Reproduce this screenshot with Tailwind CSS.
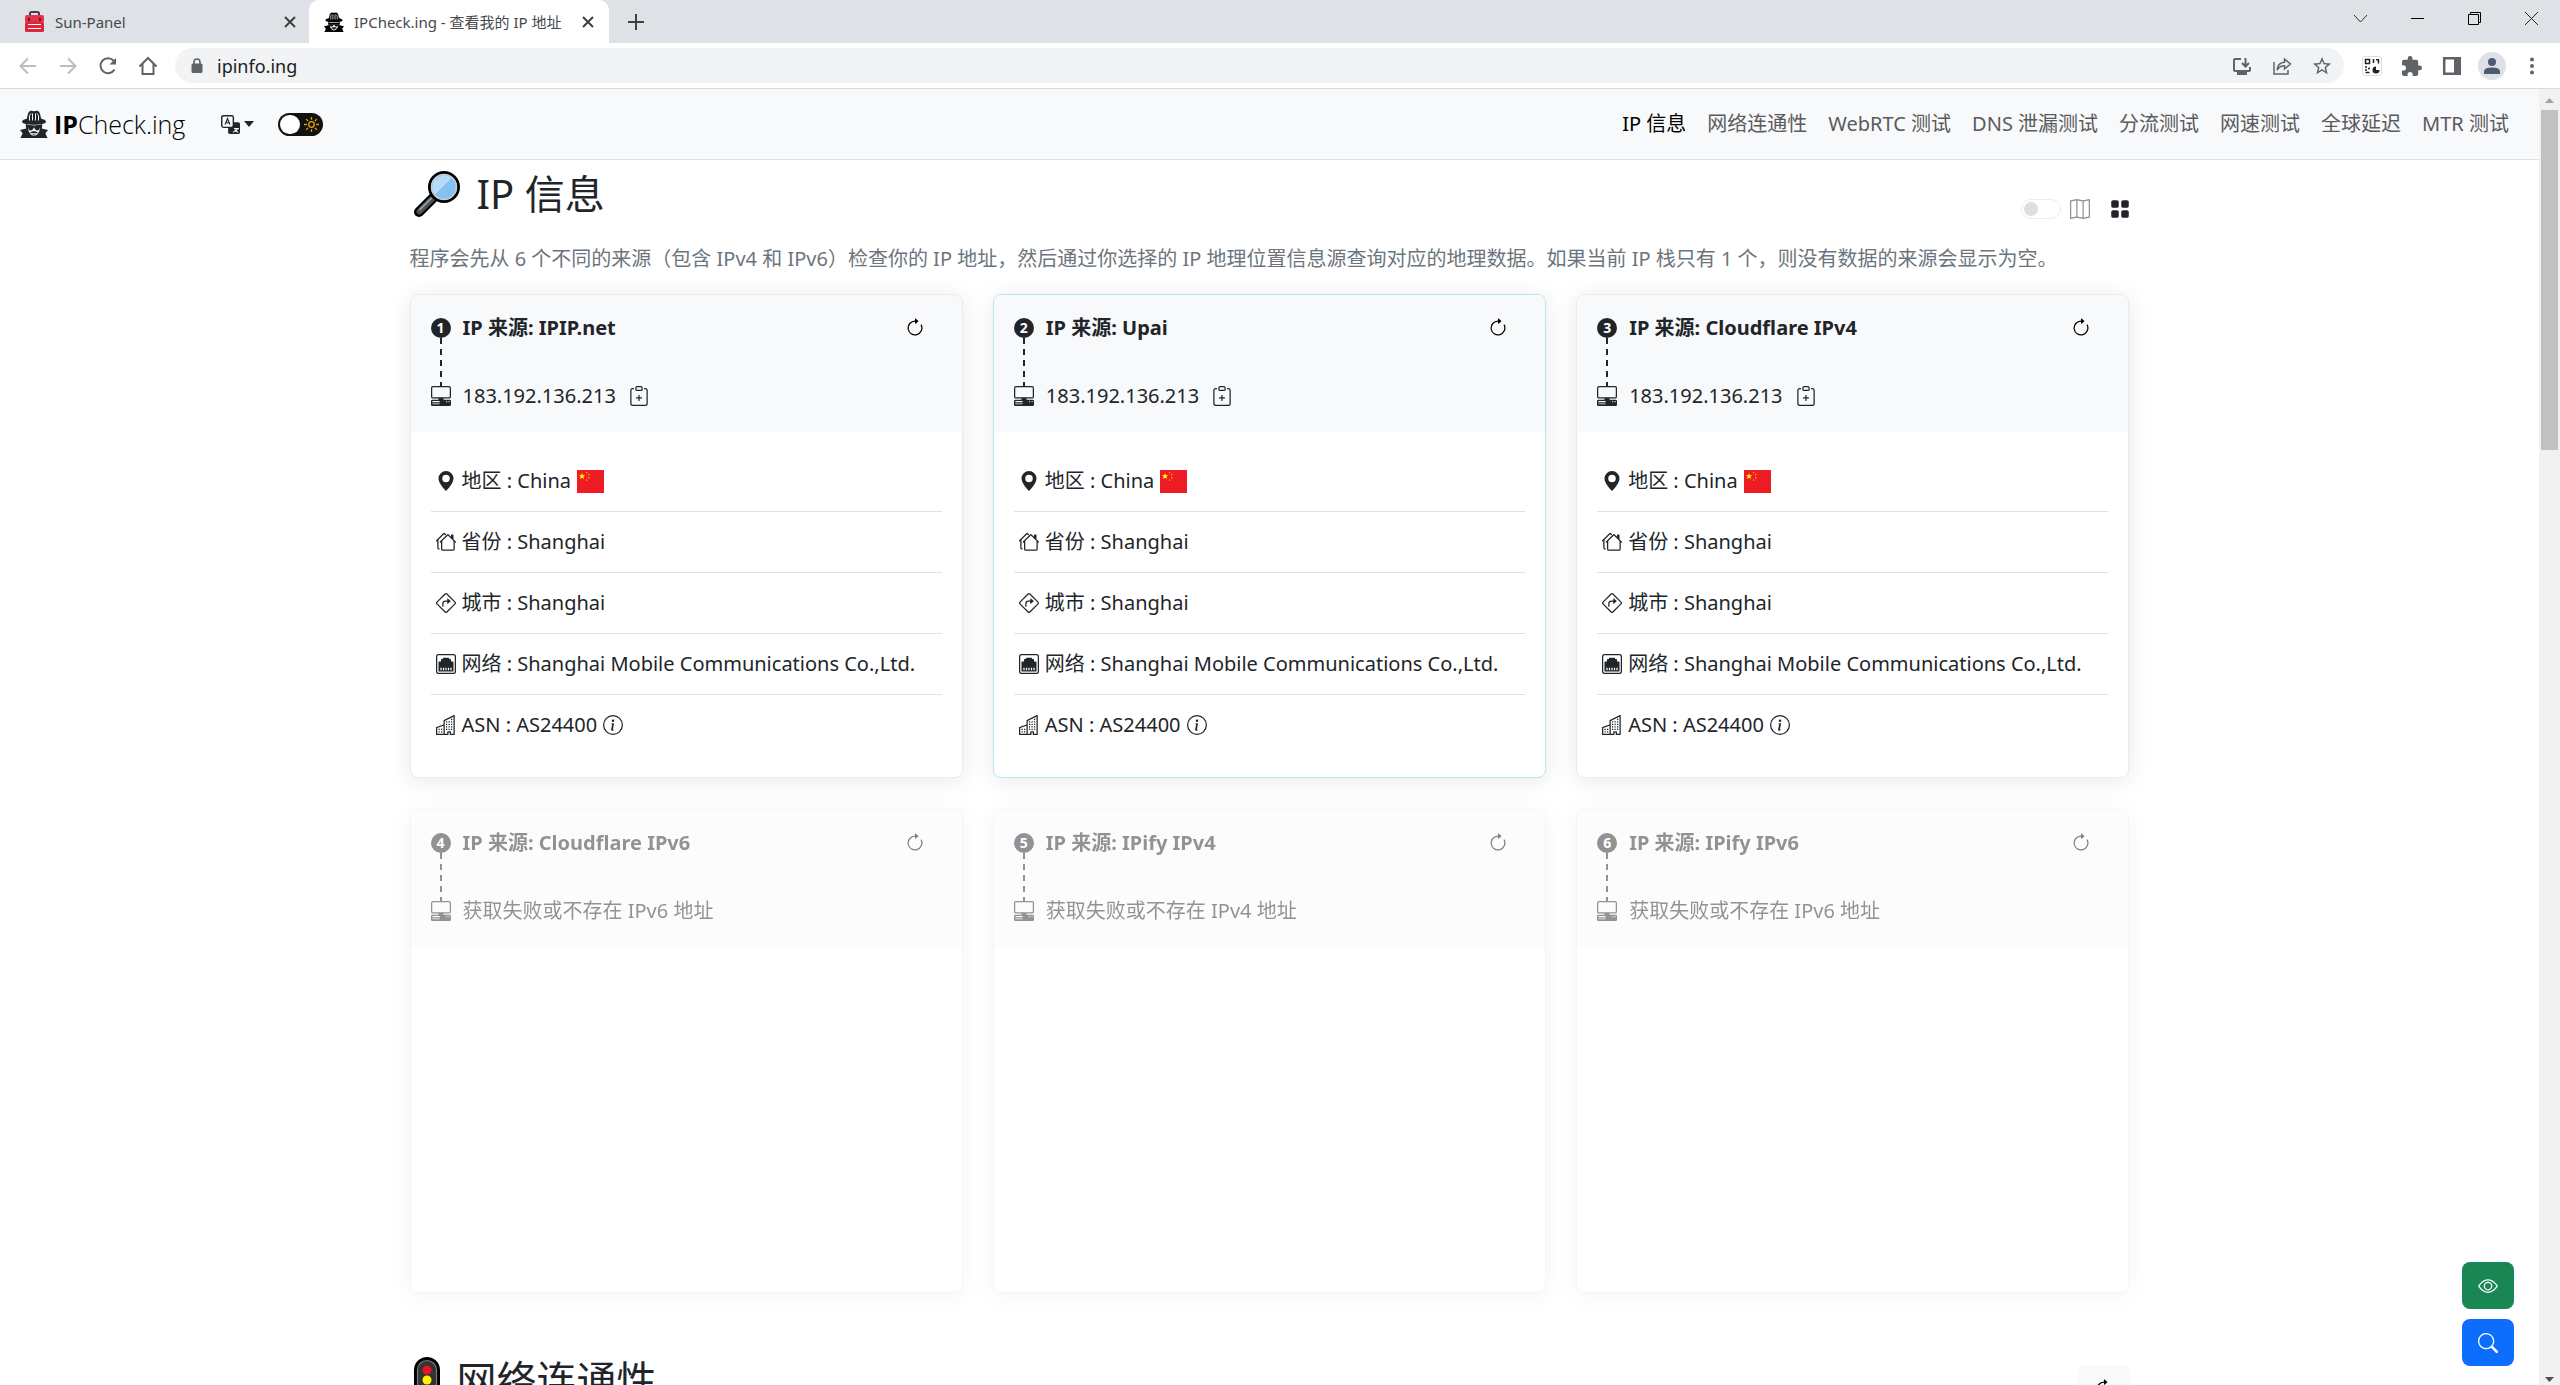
<!DOCTYPE html>
<html lang="zh-CN">
<head>
<meta charset="utf-8">
<meta name="viewport" content="width=device-width, initial-scale=1">
<title>IPCheck.ing - 查看我的 IP 地址</title>
<script src="https://cdn.jsdelivr.net/npm/@tailwindcss/browser@4"></script>
</head>
<body class="flex h-screen flex-col overflow-hidden bg-white font-['Noto_Sans','Noto_Sans_CJK_SC',sans-serif] text-[20px] leading-[30px] text-[#212529]">

<!-- Icon library -->
<svg class="hidden" aria-hidden="true">
  <symbol id="refresh" viewBox="0 0 16 16"><path fill-rule="evenodd" d="M8 3a5 5 0 1 0 4.546 2.914.5.5 0 0 1 .908-.417A6 6 0 1 1 8 2z"/><path d="M8 4.466V.534a.25.25 0 0 1 .41-.192l2.36 1.966c.12.1.12.284 0 .384L8.41 4.658A.25.25 0 0 1 8 4.466"/></symbol>
  <symbol id="pc" viewBox="0 0 16 16"><path d="M1.5 0A1.5 1.5 0 0 0 0 1.5v7A1.5 1.5 0 0 0 1.5 10H6v1H1a1 1 0 0 0-1 1v3a1 1 0 0 0 1 1h14a1 1 0 0 0 1-1v-3a1 1 0 0 0-1-1h-5v-1h4.500A1.500 1.500 0 0 0 16 8.500v-7A1.500 1.500 0 0 0 14.500 0zm0 1h13a.5.5 0 0 1 .5.5v7a.5.5 0 0 1-.5.5h-13a.5.5 0 0 1-.5-.5v-7a.5.5 0 0 1 .5-.5M12 12.500a.5.5 0 1 1 1 0 .5.5 0 0 1-1 0m2 0a.5.5 0 1 1 1 0 .5.5 0 0 1-1 0M1.500 12h5a.5.5 0 0 1 0 1h-5a.5.5 0 0 1 0-1M1 14.250a.25.25 0 0 1 .25-.25h5.500a.25.25 0 1 1 0 .5h-5.500a.25.25 0 0 1-.25-.25"/></symbol>
  <symbol id="clip" viewBox="0 0 16 16"><path fill-rule="evenodd" d="M8 7a.5.5 0 0 1 .5.5V9H10a.5.5 0 0 1 0 1H8.500v1.500a.5.5 0 0 1-1 0V10H6a.5.5 0 0 1 0-1h1.500V7.500A.5.5 0 0 1 8 7"/><path d="M4 1.500H3a2 2 0 0 0-2 2V14a2 2 0 0 0 2 2h10a2 2 0 0 0 2-2V3.500a2 2 0 0 0-2-2h-1v1h1a1 1 0 0 1 1 1V14a1 1 0 0 1-1 1H3a1 1 0 0 1-1-1V3.500a1 1 0 0 1 1-1h1z"/><path d="M9.500 1a.5.5 0 0 1 .5.5v1a.5.5 0 0 1-.5.5h-3a.5.5 0 0 1-.5-.5v-1a.5.5 0 0 1 .5-.5zm-3-1A1.500 1.500 0 0 0 5 1.500v1A1.500 1.500 0 0 0 6.500 4h3A1.500 1.500 0 0 0 11 2.500v-1A1.500 1.500 0 0 0 9.500 0z"/></symbol>
  <symbol id="geo" viewBox="0 0 16 16"><path d="M8 16s6-5.686 6-10A6 6 0 0 0 2 6c0 4.314 6 10 6 10m0-7a3 3 0 1 1 0-6 3 3 0 0 1 0 6"/></symbol>
  <symbol id="houses" viewBox="0 0 16 16"><path d="M5.793 1a1 1 0 0 1 1.414 0l.647.646a.5.5 0 1 1-.708.708L6.5 1.707 2 6.207V12.5a.5.5 0 0 0 .5.5.5.5 0 0 1 0 1A1.5 1.5 0 0 1 1 12.5V7.207l-.146.147a.5.5 0 0 1-.708-.708zm3 1a1 1 0 0 1 1.414 0L12 3.793V2.500a.5.5 0 0 1 .5-.5h1a.5.5 0 0 1 .5.5v3.293l1.854 1.853a.5.5 0 0 1-.708.708L15 8.207V13.500a1.500 1.500 0 0 1-1.500 1.500h-8A1.500 1.500 0 0 1 4 13.500V8.207l-.146.147a.5.5 0 1 1-.708-.708zm.707.707L5 7.207V13.500a.5.5 0 0 0 .5.5h8a.5.5 0 0 0 .5-.5V7.207z"/></symbol>
  <symbol id="turn" viewBox="0 0 16 16"><path d="M5 8.500A2.500 2.500 0 0 1 7.500 6H9V4.534a.25.25 0 0 1 .41-.192l2.360 1.966c.12.1.12.284 0 .384L9.410 8.658A.25.25 0 0 1 9 8.466V7H7.500A1.500 1.500 0 0 0 6 8.500V11H5z"/><path fill-rule="evenodd" d="M6.950.435c.58-.58 1.520-.58 2.100 0l6.515 6.516c.58.58.58 1.519 0 2.098L9.050 15.565c-.58.58-1.519.58-2.098 0L.435 9.050a1.480 1.480 0 0 1 0-2.098zm1.400.7a.495.495 0 0 0-.7 0L1.134 7.650a.495.495 0 0 0 0 .7l6.516 6.516a.495.495 0 0 0 .7 0l6.516-6.516a.495.495 0 0 0 0-.7L8.350 1.134z"/></symbol>
  <symbol id="ethernet" viewBox="0 0 16 16"><path fill-rule="evenodd" d="M14 13.500v-7a.5.5 0 0 0-.5-.5H12V4.500a.5.5 0 0 0-.5-.5h-1v-.5A.5.5 0 0 0 10 3H6a.5.5 0 0 0-.5.5V4h-1a.5.5 0 0 0-.5.5V6H2.500a.5.5 0 0 0-.5.5v7a.5.5 0 0 0 .5.5h11a.5.5 0 0 0 .5-.5M3.500 11h1v2h-1zM5.500 11h1v2h-1zM7.500 11h1v2h-1zM9.500 11h1v2h-1zM11.500 11h1v2h-1z"/><path d="M2 0a2 2 0 0 0-2 2v12a2 2 0 0 0 2 2h12a2 2 0 0 0 2-2V2a2 2 0 0 0-2-2zM1 2a1 1 0 0 1 1-1h12a1 1 0 0 1 1 1v12a1 1 0 0 1-1 1H2a1 1 0 0 1-1-1z"/></symbol>
  <symbol id="buildings" viewBox="0 0 16 16"><path d="M14.763.075A.5.5 0 0 1 15 .5v15a.5.5 0 0 1-.5.5h-3a.5.5 0 0 1-.5-.5V14h-1v1.500a.5.5 0 0 1-.5.5h-9a.5.5 0 0 1-.5-.5V10a.5.5 0 0 1 .342-.474L6 7.640V4.500a.5.5 0 0 1 .276-.447l8-4a.5.5 0 0 1 .487.022M6 8.694 1 10.360V15h5zM7 15h2v-1.500a.5.5 0 0 1 .5-.5h2a.5.5 0 0 1 .5.5V15h2V1.309l-7 3.500z"/><path d="M2 11h1v1H2zm2 0h1v1H4zm-2 2h1v1H2zm2 0h1v1H4zm4-4h1v1H8zm2 0h1v1h-1zm-2 2h1v1H8zm2 0h1v1h-1zm2-2h1v1h-1zm0 2h1v1h-1zM8 7h1v1H8zm2 0h1v1h-1zm2 0h1v1h-1zM8 5h1v1H8zm2 0h1v1h-1zm2 0h1v1h-1zm0-2h1v1h-1z"/></symbol>
  <symbol id="info" viewBox="0 0 16 16"><path d="M8 15A7 7 0 1 1 8 1a7 7 0 0 1 0 14m0 1A8 8 0 1 0 8 0a8 8 0 0 0 0 16"/><path d="m8.930 6.588-2.290.287-.082.380.450.083c.294.070.352.176.288.469l-.738 3.468c-.194.897.105 1.319.808 1.319.545 0 1.178-.252 1.465-.598l.088-.416c-.2.176-.492.246-.686.246-.275 0-.375-.193-.304-.533zM9 4.500a1 1 0 1 1-2 0 1 1 0 0 1 2 0"/></symbol>
  <symbol id="map" viewBox="0 0 16 16"><path fill-rule="evenodd" d="M15.817.113A.5.5 0 0 1 16 .5v14a.5.5 0 0 1-.402.490l-5 1a.5.5 0 0 1-.196 0L5.500 15.010l-4.902.980A.5.5 0 0 1 0 15.500v-14a.5.5 0 0 1 .402-.490l5-1a.5.5 0 0 1 .196 0L10.500.990l4.902-.980a.5.5 0 0 1 .415.103M10 1.910l-4-.8v12.980l4 .8zm1 12.980 4-.8V1.110l-4 .8zm-6-.8V1.110l-4 .8v12.980z"/></symbol>
  <symbol id="star" viewBox="1 1 22 22"><path d="M22 9.240l-7.190-.620L12 2 9.190 8.630 2 9.240l5.460 4.730L5.820 21 12 17.270 18.180 21l-1.630-7.030zM12 15.400l-3.760 2.270 1-4.280-3.320-2.880 4.380-.380L12 6.100l1.710 4.040 4.380.380-3.320 2.880 1 4.280z"/></symbol>
  <symbol id="spy" viewBox="0 0 28 28">
    <path d="M10 1c1.500-.8 2.500.2 4 .2S16.500.2 18 1c1.600.9 2.500 3.500 3 7.500 2.500.8 5 1.800 5 3.200 0 1.800-5.500 3-12 3S2 13.500 2 11.700c0-1.400 2.500-2.400 5-3.200C7.500 4.500 8.400 1.900 10 1z"/>
    <path d="M6 14c2 1 5 1.400 8 1.400s6-.4 8-1.400c.4 1.500.2 3-.3 4.500L28 20l-2.600 3.300L27.500 28H.5l2.100-4.700L0 20l6.300-1.500C5.800 17 5.600 15.500 6 14z"/>
    <path fill="#f8f9fb" d="M8 17h5l1 .8 1-.8h5c0 2.500-.6 4.800-2 6.500-1.200 1.400-2.600 2.500-4 2.500s-2.800-1.100-4-2.500C8.600 21.800 8 19.500 8 17z"/>
    <path d="M8 17h5.200l.8.500.8-.5H20c0 2-1 3.400-2.700 3.400-1.500 0-2.300-1-2.600-2.200h-1.400c-.3 1.200-1.100 2.200-2.600 2.200C9 20.400 8 19 8 17zM10 22.500l2.500-1.200h3l2.500 1.200-1 .8h-6zM12.500 24.600h3v1h-3z"/>
    <path fill="none" stroke="#f8f9fb" stroke-width="1" d="M9.500 10.500V5.500L11 3.500M12.500 10.500v-7M15.500 10.500v-7M18.500 10.500V5.500L17 3.500"/>
  </symbol>
</svg>

<!-- Browser tab strip -->
<header class="shrink-0">
  <div class="flex h-[43px] items-stretch bg-[#dee1e6] pl-[24px] text-[15px] text-[#45494d]">
    <div class="flex w-[285px] items-center pr-[13px]">
      <svg class="h-[21px] w-[21px]" viewBox="0 0 21 21"><path d="M6 4V2.500Q6 1 7.500 1h6Q15 1 15 2.500V4" fill="none" stroke="#3a4250" stroke-width="2"/><rect x="1" y="4" width="19" height="8" rx="2" fill="#e8304a"/><rect x="1" y="11" width="19" height="10" rx="1.500" fill="#dd2540"/><path d="M4 13.500h13M4 17.500h13" stroke="#fff" stroke-width="1.200"/><path d="M5 7v3M16 7v3" stroke="#5a2030" stroke-width="2"/></svg>
      <span class="ml-[10px] flex-1">Sun-Panel</span>
      <button aria-label="关闭标签页"><svg class="h-[12px] w-[12px]" viewBox="0 0 12 12" stroke="#3c4043" stroke-width="2"><path d="M1 1l10 10M11 1L1 11"/></svg></button>
    </div>
    <div class="flex w-[300px] items-center rounded-t-[10px] bg-white pl-[15px] pr-[15px]">
      <svg class="h-[20px] w-[20px] text-black" fill="currentColor"><use href="#spy"/></svg>
      <span class="ml-[10px] whitespace-nowrap">IPCheck.ing - 查看我的 IP 地址</span>
      <button aria-label="关闭标签页" class="ml-auto"><svg class="h-[12px] w-[12px]" viewBox="0 0 12 12" stroke="#3c4043" stroke-width="2"><path d="M1 1l10 10M11 1L1 11"/></svg></button>
    </div>
    <button aria-label="新标签页" class="ml-[19px]"><svg class="h-[16px] w-[16px]" viewBox="0 0 16 16" stroke="#3c4043" stroke-width="2"><path d="M8 0v16M0 8h16"/></svg></button>
    <div class="ml-auto flex h-[37px] items-center gap-[44px] pr-[22px]">
      <button aria-label="搜索标签页"><svg class="h-[13px] w-[13px]" viewBox="0 0 13 13" fill="none" stroke="#333"><path d="M0 3l6.500 7L13 3"/></svg></button>
      <button aria-label="最小化"><svg class="h-[13px] w-[13px]" viewBox="0 0 13 13"><path d="M0 6h13v1H0z"/></svg></button>
      <button aria-label="还原"><svg class="h-[13px] w-[13px]" viewBox="0 0 13 13" fill="none" stroke="#000"><path d="M.5 2.500h10v10H.5zM2.500 2.500V.5h10v10h-2"/></svg></button>
      <button aria-label="关闭"><svg class="h-[13px] w-[13px]" viewBox="0 0 13 13" stroke="#222"><path d="M0 0l13 13M13 0L0 13"/></svg></button>
    </div>
  </div>

  <!-- Browser toolbar -->
  <div class="flex h-[46px] items-center border-b border-[#d8dadd] bg-white pl-[18px] pr-[18px]">
    <div class="flex items-center gap-[20px]">
      <button aria-label="后退"><svg class="h-[20px] w-[20px]" viewBox="0 0 20 20" fill="none" stroke="#babcbe" stroke-width="2"><path d="M18 10H3M10 2.500L2.500 10l7.500 7.500"/></svg></button>
      <button aria-label="前进"><svg class="h-[20px] w-[20px]" viewBox="0 0 20 20" fill="none" stroke="#babcbe" stroke-width="2"><path d="M2 10h15M10 2.500l7.500 7.500-7.500 7.500"/></svg></button>
      <button aria-label="重新加载"><svg class="h-[20px] w-[20px]" viewBox="0 0 20 20" fill="none" stroke="#5f6368" stroke-width="2"><path d="M16.500 13.500A7.500 7.500 0 1 1 15.500 4.500L17 6"/><path d="M18 2v6.500h-6.500z" fill="#5f6368" stroke="none"/></svg></button>
      <button aria-label="主页"><svg class="h-[20px] w-[20px]" viewBox="0 0 20 20" fill="none" stroke="#5f6368" stroke-width="2"><path d="M1.500 10.500L10 2l8.500 8.500M4.500 8v10h11V8"/></svg></button>
    </div>
    <div class="ml-[17px] flex h-[35px] flex-1 items-center rounded-full bg-[#f1f3f4] pl-[16px] pr-[12px]">
      <svg class="h-[16px] w-[12px]" viewBox="0 0 12 16"><path d="M3 6V4a3 3 0 0 1 6 0v2" fill="none" stroke="#5f6368" stroke-width="1.600"/><rect x=".5" y="5.500" width="11" height="9.500" rx="1.500" fill="#5f6368"/></svg>
      <input aria-label="地址" class="ml-[14px] min-w-0 flex-1 bg-transparent text-[18px] leading-[24px] text-[#202124]" value="ipinfo.ing">
      <div class="flex items-center gap-[20px]">
        <button aria-label="安装应用"><svg class="h-[20px] w-[20px]" viewBox="0 0 20 20" fill="none" stroke="#5f6368" stroke-width="2"><path d="M9 3H3q-1 0-1 1v10q0 1 1 1h14q1 0 1-1v-3M13.500 2v8M10 7l3.500 3.500L17 7"/><path d="M5 15h10v4H5z" fill="#5f6368" stroke="none"/></svg></button>
        <button aria-label="分享"><svg class="h-[20px] w-[20px]" viewBox="0 0 20 20" fill="none" stroke="#5f6368" stroke-width="1.500"><path d="M2 6v12h14v-4M5 14c.5-4.500 3-7.500 7.500-7.700V3L18.500 8l-6 5V9.800C9 9.800 7 11 5 14z"/></svg></button>
        <button aria-label="收藏"><svg class="h-[20px] w-[20px]" fill="#5f6368"><use href="#star"/></svg></button>
      </div>
    </div>
    <div class="ml-[18px] flex items-center gap-[20px]">
      <button aria-label="二维码"><svg class="h-[20px] w-[20px]" viewBox="0 0 20 20"><rect x=".5" y=".5" width="19" height="19" rx="2" fill="#fff" stroke="#ddd"/><path d="M3.500 3.500h4v4h-4zM11.500 3v4M14 3.700h3M16.500 4v3.500M3 11h2M6 12.500h2M3 14h2M3.500 16.500h4" fill="none" stroke="#222" stroke-width="1.500"/><path d="M14 10.500a3.500 3.500 0 1 0 3.500 3.500H14z" fill="#222"/></svg></button>
      <button aria-label="扩展程序"><svg class="h-[20px] w-[20px]" viewBox="2 1 21 21" fill="#5f6368"><path d="M20.500 11H19V7c0-1.100-.9-2-2-2h-4V3.500a2.500 2.500 0 0 0-5 0V5H4c-1.100 0-2 .9-2 2v3.800h1.500a2.700 2.700 0 0 1 0 5.400H2V20c0 1.100.9 2 2 2h3.800v-1.500a2.700 2.700 0 0 1 5.400 0V22H17c1.100 0 2-.9 2-2v-4h1.500a2.500 2.500 0 0 0 0-5z"/></svg></button>
      <button aria-label="侧边栏"><svg class="h-[20px] w-[20px]" viewBox="0 0 20 20" fill="none" stroke="#5f6368" stroke-width="2.500"><path d="M2.200 2.200h15.600v15.600H2.200z"/><path d="M12 2h6v16h-6z" fill="#5f6368" stroke="none"/></svg></button>
      <button aria-label="用户" class="-mx-1"><svg class="h-[28px] w-[28px]" viewBox="0 0 28 28"><circle cx="14" cy="14" r="14" fill="#dee1e8"/><circle cx="14" cy="10" r="4" fill="#4e5a72"/><path d="M6 22v-2.500q0-4 8-4t8 4V22z" fill="#4e5a72"/></svg></button>
      <button aria-label="更多"><svg class="h-[20px] w-[20px]" viewBox="0 0 20 20" fill="#5f6368"><circle cx="10" cy="3.500" r="2"/><circle cx="10" cy="10" r="2"/><circle cx="10" cy="16.500" r="2"/></svg></button>
    </div>
  </div>
</header>

<div class="flex min-h-0 flex-1">
  <div class="relative min-w-0 flex-1 overflow-hidden">
    <!-- Site navigation -->
    <nav class="flex h-[71px] items-center border-b border-[#dcdfe3] bg-[#f8f9fb] pl-[20px] pr-[30px]">
      <a href="#" class="flex items-center font-['Open_Sans','Noto_Sans',sans-serif] text-[25px] font-light leading-[38px] text-black">
        <svg class="mr-[6px] h-[28px] w-[28px] text-[#212529]" fill="currentColor"><use href="#spy"/></svg><span><b class="font-bold">IP</b>Check.ing</span>
      </a>
      <button aria-label="语言" class="ml-[36px] flex items-center gap-[4px]">
        <svg class="h-[19px] w-[19px]" viewBox="0 0 16 16" fill="none" stroke="#212529"><rect x="6" y="6" width="10" height="10" rx="1.500" fill="#212529" stroke="none"/><rect x=".6" y=".6" width="9.800" height="9.800" rx="1.500" fill="#f8f9fb" stroke-width="1.200"/><path d="M3.500 8l2-5 2 5M4.200 6.500h2.600"/><path d="M11 11.500h4M14 11.500c-.8 1.600-2 2.500-4 3M11.500 12.500c.8 1 1.800 1.600 3 2" stroke="#fff"/></svg>
        <svg class="h-[6px] w-[10px]" viewBox="0 0 10 6"><path d="M0 0h10L5 6z" fill="#212529"/></svg>
      </button>
      <button role="switch" aria-checked="false" aria-label="深色模式" class="ml-[24px] flex h-[23px] w-[45px] items-center justify-between rounded-full bg-[#121212] pl-[2px] pr-[4px]">
        <span class="h-[19px] w-[20px] rounded-full bg-white"></span>
        <svg class="h-[15px] w-[15px]" viewBox="0 0 16 16" fill="none" stroke="#e8a200" stroke-width="1.400"><circle cx="8" cy="8" r="3"/><path d="M8 0v3M8 13v3M0 8h3M13 8h3M2.300 2.300l2 2M11.700 11.700l2 2M13.700 2.300l-2 2M4.300 11.700l-2 2"/></svg>
      </button>
      <div class="ml-auto flex gap-[21px] whitespace-nowrap text-[#5a5b5d]">
        <a href="#ip" class="text-black">IP 信息</a><a href="#connectivity">网络连通性</a><a href="#webrtc">WebRTC 测试</a><a href="#dns">DNS 泄漏测试</a><a href="#diversion">分流测试</a><a href="#speed">网速测试</a><a href="#latency">全球延迟</a><a href="#mtr">MTR 测试</a>
      </div>
    </nav>

    <main class="mx-auto max-w-[1720px] pt-[4px]">
      <section id="ip">
        <div class="flex items-end justify-between">
          <h1 class="flex items-center gap-[17px] pl-[4px] text-[40px] leading-[60px]">
            <svg class="h-[46px] w-[46px]" viewBox="0 0 46 46"><path d="M19 27L5 41" stroke="#000" stroke-width="10" stroke-linecap="round"/><path d="M18 28L5.500 40.500" stroke="#4a5258" stroke-width="6" stroke-linecap="round"/><path d="M17 27.500L6 38.500" stroke="#8a959c" stroke-width="2" stroke-linecap="round"/><circle cx="30" cy="16" r="14.500" fill="#86c0f0" stroke="#000" stroke-width="3"/><circle cx="30" cy="16" r="12.500" fill="none" stroke="#c4ccd4" stroke-width="1.500"/><path d="M18.500 17.500A11.800 11.800 0 0 1 37.500 7L21 23.500a11.800 11.800 0 0 1-2.500-6z" fill="#b4dcf6"/></svg>
            IP 信息
          </h1>
          <div class="mb-[5px] flex items-center">
            <label class="flex items-center gap-[9px]">
              <input type="checkbox" role="switch" disabled aria-label="显示地图" class="flex h-[20px] w-[40px] appearance-none items-center rounded-full border border-[#ededed] bg-white pl-[2px] before:block before:h-[14px] before:w-[14px] before:rounded-full before:bg-[#dedede] before:content-['']">
              <svg class="h-[20px] w-[20px]" fill="#8f9193"><use href="#map"/></svg>
            </label>
            <button aria-label="卡片视图" class="ml-[20px]"><svg class="h-[20px] w-[20px]" viewBox="0 0 16 16" fill="#212529"><rect x="1" y="1" width="6" height="6" rx="1.500"/><rect x="9" y="1" width="6" height="6" rx="1.500"/><rect x="1" y="9" width="6" height="6" rx="1.500"/><rect x="9" y="9" width="6" height="6" rx="1.500"/></svg></button>
          </div>
        </div>
        <p class="mt-[20px] text-[#6c757d]">程序会先从 6 个不同的来源（包含 IPv4 和 IPv6）检查你的 IP 地址，然后通过你选择的 IP 地理位置信息源查询对应的地理数据。如果当前 IP 栈只有 1 个，则没有数据的来源会显示为空。</p>
        <div id="cards" class="mt-[20px] grid grid-cols-3 gap-x-[30px] gap-y-[31px]"></div>
      </section>

      <section id="connectivity" class="mt-[57px]">
        <div class="flex items-start justify-between">
          <h2 class="flex items-center gap-[17px] pl-[4px] text-[40px] leading-[60px]">
            <svg class="h-[46px] w-[26px]" viewBox="0 0 26 46"><rect width="26" height="46" rx="13"/><rect x="3.500" y="3.500" width="19" height="39" rx="9.500" fill="#333" stroke="#777" stroke-width="1.200"/><circle cx="13" cy="13" r="4.500" fill="#e81224"/><circle cx="13" cy="23" r="4.500" fill="#fff100"/><circle cx="13" cy="33" r="4.500" fill="#16c60c"/></svg>
            网络连通性
          </h2>
          <button aria-label="刷新" class="mt-[15px] flex h-[48px] w-[52px] items-center justify-center rounded-[8px] bg-[#f8f9fa] text-black"><svg class="h-[20px] w-[20px]" fill="currentColor"><use href="#refresh"/></svg></button>
        </div>
      </section>
    </main>

    <!-- Floating actions -->
    <div class="absolute bottom-[19px] right-[25px] flex flex-col gap-[10px]">
      <button aria-label="隐藏信息" class="flex h-[47px] w-[52px] items-center justify-center rounded-[8px] bg-[#198754]"><svg class="h-[20px] w-[20px]" viewBox="0 0 16 16" fill="#fff"><path d="M16 8s-3-5.500-8-5.500S0 8 0 8s3 5.500 8 5.500S16 8 16 8M1.173 8a13 13 0 0 1 1.660-2.043C4.120 4.668 5.880 3.500 8 3.500s3.879 1.168 5.168 2.457A13 13 0 0 1 14.828 8q-.086.130-.195.288c-.335.480-.830 1.120-1.465 1.755C11.879 11.332 10.119 12.500 8 12.500s-3.879-1.168-5.168-2.457A13 13 0 0 1 1.172 8z"/><path d="M8 5.500a2.500 2.500 0 1 0 0 5 2.500 2.500 0 0 0 0-5M4.500 8a3.500 3.500 0 1 1 7 0 3.500 3.500 0 0 1-7 0"/></svg></button>
      <button aria-label="查询" class="flex h-[47px] w-[52px] items-center justify-center rounded-[8px] bg-[#0d6efd]"><svg class="h-[20px] w-[20px]" viewBox="0 0 16 16" fill="#fff"><path d="M11.742 10.344a6.500 6.500 0 1 0-1.397 1.398h-.001q.044.060.098.115l3.850 3.850a1 1 0 0 0 1.415-1.414l-3.850-3.850a1 1 0 0 0-.115-.1zM12 6.500a5.500 5.500 0 1 1-11 0 5.500 5.500 0 0 1 11 0"/></svg></button>
    </div>
  </div>

  <!-- Scrollbar -->
  <div class="flex w-[21px] shrink-0 flex-col items-center bg-[#f1f1f1]">
    <svg class="h-[21px] w-[9px]" viewBox="0 0 9 21"><path d="M0 14h9L4.500 9z" fill="#a3a3a3"/></svg>
    <div class="h-[340px] w-[17px] bg-[#c1c1c1]"></div>
    <svg class="mt-auto h-[12px] w-[9px]" viewBox="0 0 9 12"><path d="M0 4h9L4.500 9z" fill="#505050"/></svg>
  </div>
</div>

<script>
  const sources = [
    { name: 'IPIP.net', ip: '183.192.136.213' },
    { name: 'Upai', ip: '183.192.136.213', active: true },
    { name: 'Cloudflare IPv4', ip: '183.192.136.213' },
    { name: 'Cloudflare IPv6', missing: '获取失败或不存在 IPv6 地址' },
    { name: 'IPify IPv4', missing: '获取失败或不存在 IPv4 地址' },
    { name: 'IPify IPv6', missing: '获取失败或不存在 IPv6 地址' },
  ];
  const flag = '<svg class="h-[23px] w-[27px]" viewBox="0 0 27 23" role="img" aria-label="中国"><path d="M0 0h27v23H0z" fill="#ee1c25"/><path d="M5 3l.9 2.200 2.300.1-1.800 1.500.6 2.300L5 7.800 3 9.100l.6-2.300L1.800 5.300l2.300-.1z" fill="#ff0"/><path d="M9 2h1.200v1.200H9zM11.200 4h1.200v1.500h-1.200zM11.200 7h1.200v1.500h-1.200zM9 9.500h1.200v1.200H9z" fill="#ffb000"/></svg>';
  const info = '<button aria-label="ASN 详情"><svg class="h-[20px] w-[20px]" fill="#212529"><use href="#info"/></svg></button>';
  const rows = [
    ['geo', '地区', 'China', flag],
    ['houses', '省份', 'Shanghai', ''],
    ['turn', '城市', 'Shanghai', ''],
    ['ethernet', '网络', 'Shanghai Mobile Communications Co.,Ltd.', ''],
    ['buildings', 'ASN', 'AS24400', info],
  ];
  const row = ([icon, label, value, extra]) => `
    <li class="flex h-[61px] items-center gap-[6px] whitespace-nowrap border-b border-[#dee2e6] pl-[5px] last:border-transparent">
      <svg class="h-[20px] w-[20px] shrink-0" fill="#212529"><use href="#${icon}"/></svg>
      <span>${label} : ${value}</span>${extra}
    </li>`;
  const card = (s, i) => `
    <article class="min-h-[484px] overflow-hidden rounded-[8px] border bg-white shadow-[0_3px_24px_rgba(0,0,0,0.09)] ${s.active ? 'border-[#b6e6f2]' : 'border-[#e9ebed]'} ${s.ip ? '' : 'opacity-50'}">
      <div class="flex h-[137px] gap-[12px] px-[20px] pt-[23px] ${s.ip ? 'bg-[#f8f9fb]' : 'bg-[#f9f9f9]'}">
        <div class="flex h-[88px] flex-col items-center">
          <span class="flex h-[20px] w-[20px] items-center justify-center rounded-full bg-[#212529] text-[14px] font-bold leading-[20px] text-white">${i + 1}</span>
          <svg class="h-[48px] w-[2px]" viewBox="0 0 2 48"><path d="M1 0v48" stroke="#212529" stroke-width="2" stroke-dasharray="6 5"/></svg>
          <svg class="h-[20px] w-[20px]" fill="#212529"><use href="#pc"/></svg>
        </div>
        <div class="flex min-w-0 flex-1 flex-col">
          <div class="flex h-[20px] items-center justify-between pr-[17px]">
            <h3 class="font-bold">IP 来源: ${s.name}</h3>
            <button aria-label="刷新" class="text-black"><svg class="h-[20px] w-[20px]" fill="currentColor"><use href="#refresh"/></svg></button>
          </div>
          <div class="mt-[48px] flex h-[20px] items-center gap-[13px]">
            <span>${s.ip || s.missing}</span>
            ${s.ip ? '<button aria-label="复制"><svg class="h-[20px] w-[20px]" fill="#212529"><use href="#clip"/></svg></button>' : ''}
          </div>
        </div>
      </div>
      ${s.ip ? `<ul class="px-[20px] pt-[19px]">${rows.map(row).join('')}</ul>` : ''}
    </article>`;
  document.getElementById('cards').innerHTML = sources.map(card).join('');
</script>
</body>
</html>
